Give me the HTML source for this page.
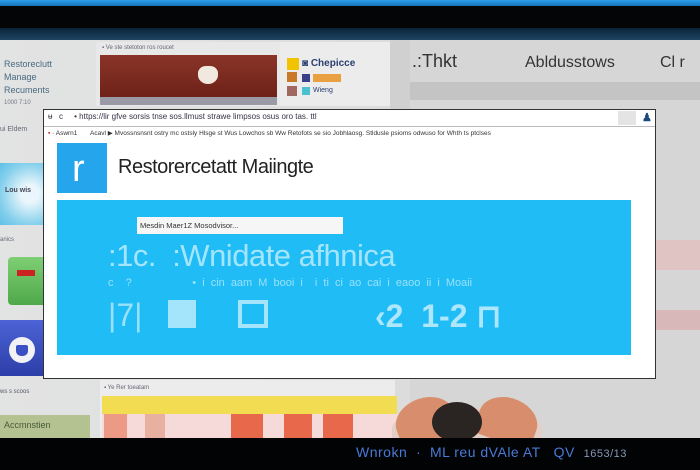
<!DOCTYPE html>
<html><head><meta charset="utf-8"><style>
*{margin:0;padding:0;box-sizing:border-box}
body{width:700px;height:470px;overflow:hidden;background:#d8d9da;font-family:"Liberation Sans",sans-serif;position:relative}
.a{position:absolute}
</style></head><body>
<div class="a" style="left:0;top:0;width:700px;height:6px;background:linear-gradient(#2aa0e8,#1572b8)"></div>
<div class="a" style="left:0;top:6px;width:700px;height:22px;background:#030507"></div>
<div class="a" style="left:0;top:28px;width:700px;height:12px;background:linear-gradient(#0b2438,#1d4462)"></div>
<div class="a" style="left:0;top:40px;width:700px;height:398px;background:linear-gradient(90deg,#e2e3e3,#dcdcdc 60%,#d4d4d4)"></div>
<div class="a" style="left:410px;top:40px;width:290px;height:398px;background:#d6d6d6"></div>
<div class="a" style="left:4px;top:58px;font-size:9px;color:#4a6a80;line-height:13px">Restoreclutt<br>Manage<br>Recuments</div>
<div class="a" style="left:4px;top:100px;font-size:6px;color:#778">1000 7:10</div>
<div class="a" style="left:0;top:126px;font-size:7px;color:#667">ui Eldem</div>
<div class="a" style="left:0;top:163px;width:43px;height:62px;background:radial-gradient(ellipse at 70% 50%,#eaf6fb 20%,#86d0ec 70%,#5fc0e8);"></div>
<div class="a" style="left:5px;top:187px;font-size:7px;color:#445;font-weight:bold">Lou wis</div>
<div class="a" style="left:0;top:237px;font-size:6px;color:#667">anics</div>
<div class="a" style="left:8px;top:257px;width:35px;height:48px;background:linear-gradient(#7fcf74,#4fa84a);border-radius:4px 0 0 4px"></div>
<div class="a" style="left:17px;top:270px;width:18px;height:6px;background:#c22;"></div>
<div class="a" style="left:0;top:320px;width:43px;height:56px;background:linear-gradient(#4c63d6,#2c3ea8)"></div>
<div class="a" style="left:9px;top:337px;width:26px;height:26px;border-radius:50%;background:#f2f2f6"></div>
<div class="a" style="left:16px;top:345px;width:12px;height:11px;border-radius:2px 2px 5px 5px;background:#3a4fc4"></div>
<div class="a" style="left:0;top:389px;font-size:6px;color:#556">ws s scoos</div>
<div class="a" style="left:0;top:415px;width:90px;height:23px;background:#b3c290;font-size:9px;color:#4a5a3a;padding:5px 4px">Accmnstien</div>
<div class="a" style="left:96px;top:42px;width:185px;height:64px;background:#e8e8e8"></div>
<div class="a" style="left:102px;top:45px;font-size:6px;color:#667">▪ Ve ste stetoton ros roucet</div>
<div class="a" style="left:100px;top:55px;width:177px;height:42px;background:linear-gradient(#8a3428,#6e2218)"></div>
<div class="a" style="left:198px;top:66px;width:20px;height:18px;background:#f1e8e0;border-radius:40% 40% 50% 50%"></div>
<div class="a" style="left:100px;top:97px;width:177px;height:8px;background:#9a9aa6"></div>
<div class="a" style="left:280px;top:42px;width:110px;height:64px;background:#ececec"></div>
<div class="a" style="left:287px;top:58px;width:12px;height:12px;background:#f2c400"></div>
<div class="a" style="left:287px;top:72px;width:10px;height:10px;background:#c87a28"></div>
<div class="a" style="left:287px;top:86px;width:10px;height:10px;background:#a06860"></div>
<div class="a" style="left:302px;top:58px;font-size:10px;color:#2a4070;font-weight:bold">◙ Chepicce</div>
<div class="a" style="left:302px;top:74px;width:8px;height:8px;background:#3a4088"></div>
<div class="a" style="left:313px;top:74px;width:28px;height:8px;background:#e8a040"></div>
<div class="a" style="left:302px;top:87px;width:8px;height:8px;background:#4ac0d0"></div>
<div class="a" style="left:313px;top:87px;font-size:7px;color:#2a4070">Wieng</div>
<div class="a" style="left:390px;top:40px;width:20px;height:70px;background:#d0d0d0"></div>
<div class="a" style="left:412px;top:51px;font-size:18px;color:#333">.:Thkt</div>
<div class="a" style="left:525px;top:54px;font-size:16px;color:#333">Abldusstows</div>
<div class="a" style="left:660px;top:54px;font-size:16px;color:#333">Cl r</div>
<div class="a" style="left:410px;top:82px;width:290px;height:18px;background:#c4c4c4"></div>
<div class="a" style="left:656px;top:240px;width:44px;height:30px;background:#e0c4c4"></div>
<div class="a" style="left:656px;top:310px;width:44px;height:20px;background:#d8b8b8"></div>
<div class="a" style="left:100px;top:380px;width:295px;height:58px;background:#ececec"></div>
<div class="a" style="left:104px;top:385px;font-size:6px;color:#667">▪ Ye Rer toeatam</div>
<div class="a" style="left:102px;top:396px;width:295px;height:18px;background:#f1dc52"></div>
<div class="a" style="left:102px;top:414px;width:295px;height:24px;background:#f6dada"></div>
<div class="a" style="left:104px;top:414px;width:23px;height:24px;background:#ec9a86"></div>
<div class="a" style="left:145px;top:414px;width:20px;height:24px;background:#e8b0a0"></div>
<div class="a" style="left:231px;top:414px;width:32px;height:24px;background:#e8684c"></div>
<div class="a" style="left:284px;top:414px;width:28px;height:24px;background:#e8684c"></div>
<div class="a" style="left:323px;top:414px;width:30px;height:24px;background:#e8684c"></div>
<div class="a" style="left:392px;top:408px;width:150px;height:40px;border-radius:50% 50% 0 0;background:#e2cfc6"></div>
<div class="a" style="left:395px;top:398px;width:60px;height:45px;border-radius:50% 50% 0 0;background:#d88e6c;transform:rotate(-20deg)"></div>
<div class="a" style="left:478px;top:398px;width:60px;height:45px;border-radius:50% 50% 0 0;background:#d88e6c;transform:rotate(20deg)"></div>
<div class="a" style="left:432px;top:402px;width:50px;height:40px;border-radius:50%;background:#2a2422"></div>
<div class="a" style="left:0;top:438px;width:700px;height:32px;background:#020304"></div>
<div class="a" style="left:356px;top:444px;font-size:14px;color:#4a7ad8;white-space:nowrap;letter-spacing:0.5px">Wnrokn &nbsp;· &nbsp;ML reu dVAle AT &nbsp; QV &nbsp;<span style="font-size:11px;color:#8898b8">1653/13</span></div>
<div class="a" style="left:43px;top:109px;width:613px;height:270px;background:#fff;border:1px solid #333"></div>
<div class="a" style="left:44px;top:110px;width:611px;height:17px;border-bottom:1px solid #bbb"></div>
<div class="a" style="left:48px;top:112px;font-size:8px;color:#334;white-space:nowrap">ᵾ&nbsp;&nbsp; c &nbsp;&nbsp;&nbsp; • https://lir gfve sorsis tnse sos.llmust strawe limpsos osus oro tas. ttl</div>
<div class="a" style="left:618px;top:111px;width:18px;height:14px;background:#e4e4e4"></div>
<div class="a" style="left:642px;top:111px;font-size:11px;color:#1a4a7a;font-weight:bold">♟</div>
<div class="a" style="left:48px;top:129px;font-size:6.5px;color:#333;white-space:nowrap"><span style="color:#c22">▪</span> · Aswrn1 &nbsp;&nbsp;&nbsp;&nbsp;&nbsp;&nbsp;Acavl ▶ Mvossnsnsnt ostry mc ostsly Hlsge st Wus Lowchos sb Ww Retofots se sio Jobhlaosg. Stldusle psioms odwuso for Whth ts ptclses</div>
<div class="a" style="left:57px;top:143px;width:50px;height:50px;background:#25a6ec"></div>
<div class="a" style="left:72px;top:150px;font-size:38px;color:#fff;line-height:38px">r</div>
<div class="a" style="left:118px;top:156px;font-size:20px;color:#222;letter-spacing:-0.5px">Restorercetatt Maiingte</div>
<div class="a" style="left:57px;top:200px;width:574px;height:155px;background:#20bcf6"></div>
<div class="a" style="left:137px;top:217px;width:206px;height:17px;background:#f6f6f6;font-size:7.5px;color:#333;padding:4px 3px;white-space:nowrap">Mesdin Maer1Z Mosodvisor...</div>
<div class="a" style="left:108px;top:238px;font-size:31px;color:rgba(235,250,255,.65);white-space:nowrap;letter-spacing:-0.5px">:1c. &nbsp;:Wnidate afhnica</div>
<div class="a" style="left:108px;top:277px;font-size:11px;color:rgba(235,250,255,.6);white-space:nowrap;word-spacing:3px">c &nbsp;? &nbsp;&nbsp;&nbsp;&nbsp;&nbsp;&nbsp;&nbsp;&nbsp;&nbsp;• i cin aam M booi i &nbsp;i ti ci ao cai i eaoo ii i Moaii</div>
<div class="a" style="left:108px;top:297px;font-size:32px;color:rgba(235,250,255,.6);white-space:nowrap">|7|</div>
<div class="a" style="left:168px;top:300px;width:28px;height:28px;background:rgba(235,250,255,.65)"></div>
<div class="a" style="left:238px;top:300px;width:30px;height:28px;border:4px solid rgba(235,250,255,.65)"></div>
<div class="a" style="left:375px;top:297px;font-size:32px;color:rgba(235,250,255,.7);font-weight:bold;white-space:nowrap">‹2 &nbsp;1-2 ⊓</div>
</body></html>
